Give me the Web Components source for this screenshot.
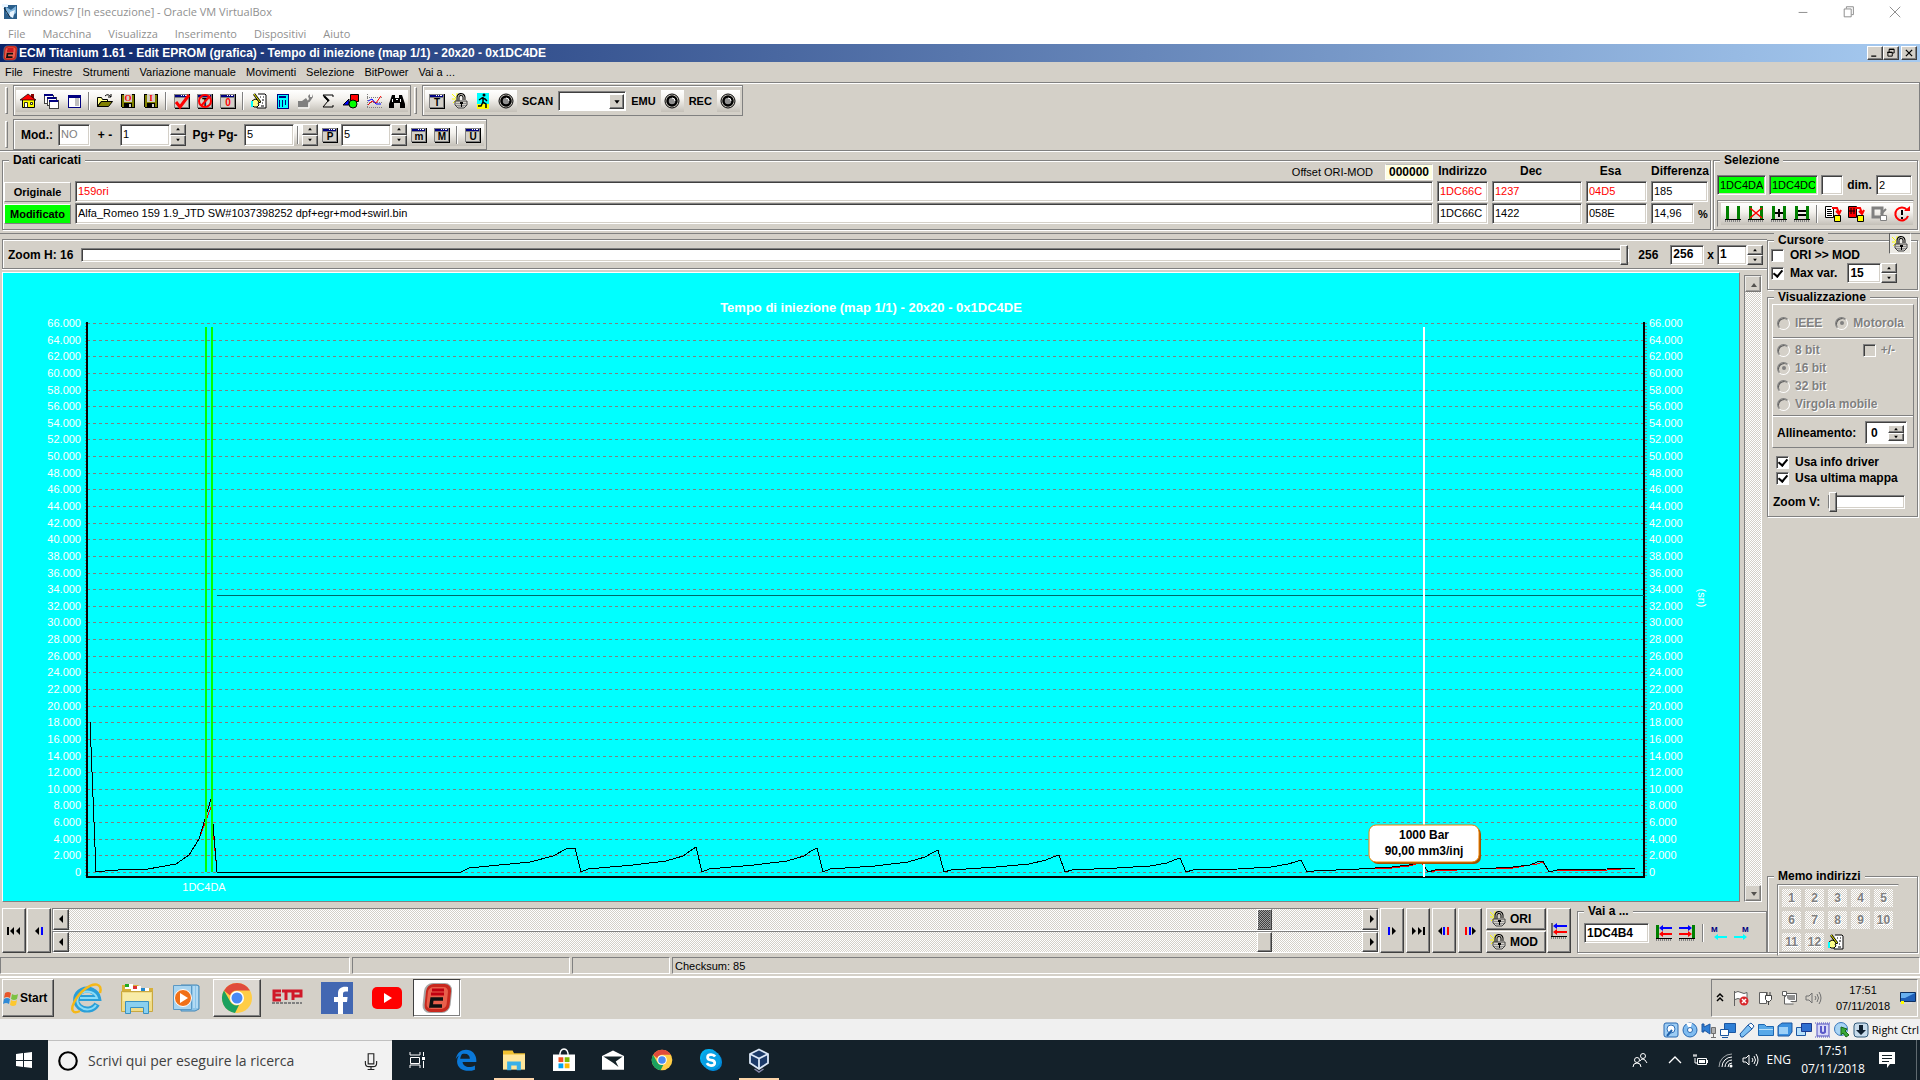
<!DOCTYPE html>
<html lang="it">
<head>
<meta charset="utf-8">
<title>windows7 [In esecuzione] - Oracle VM VirtualBox</title>
<style>
  body {
    margin: 0;
    background: #d4d0c8;
    color: #000;
    font: 11px/14px "Liberation Sans", Arial, sans-serif;
  }
</style>
</head>
<body>
<vm-desktop></vm-desktop>

<script>
const shared = `
  * { box-sizing: border-box; }
  :host { display: block; }
  button, input, select { font: inherit; color: inherit; margin: 0; padding: 0; border-radius: 0; }
  a { color: inherit; text-decoration: none; }
  .row { display: flex; align-items: center; }
  .raised {
    background: #d4d0c8;
    border: 1px solid;
    border-color: #fff #404040 #404040 #fff;
    box-shadow: inset -1px -1px #808080;
  }
  .dither { background: repeating-conic-gradient(#fff 0 25%, #d4d0c8 0 50%) 0 0 / 2px 2px; }
`;

class Part extends HTMLElement {
  connectedCallback() {
    if (this.shadowRoot) return;
    this.attachShadow({mode: 'open'});
    this.shadowRoot.innerHTML = `<style>${shared}${this.css()}</style>${this.html()}`;
    this.ready();
  }
  attr(name, fallback = '') {
    return this.hasAttribute(name) ? this.getAttribute(name) : fallback;
  }
  css() { return ''; }
  html() { return '<slot></slot>'; }
  ready() {}
}

/* ---------- icons ---------- */

const win = (letter, color = '#000', size = 10) => `
  <g shape-rendering="crispEdges"><path fill="#000" d="M1 1h15v15H1z"/><path fill="#808080" d="M0 1h15v14H0z"/>
  <path fill="#d4d0c8" d="M1 5h13v9H1z"/><path fill="#000080" d="M1 2h13v2H1z"/>
  <path fill="#fff" d="M7 2h1v1H7zM9 2h1v1H9zM11 2h2v1h-2z"/></g>
  <text x="8" y="13" text-anchor="middle" font-family="Liberation Sans" font-weight="bold" font-size="${size}" fill="${color}">${letter}</text>`;

const floppy = letter => `
  <g shape-rendering="crispEdges"><path fill="#000" d="M1 1h14v14H2l-1-1z"/><path fill="#808000" d="M2 2h2v12H2zM12 2h2v12h-2zM4 9h8v1H4z"/>
  <path fill="#d4d0c8" d="M4 1h8v8H4z"/><path fill="#d4d0c8" d="M9 11h2v3H9z"/></g>
  <text x="8" y="8" text-anchor="middle" font-family="Liberation Serif" font-weight="bold" font-size="9" fill="#f00">${letter}</text>`;

const lock = `
  <path stroke="#ff0" stroke-width="1" d="M0 1l4 4M0 6h4M5 0v4M1 10l3-3"/>
  <path fill="none" stroke="#000" stroke-width="3" d="M6 8V5a3 3 0 0 1 6-1v3"/><path fill="none" stroke="#d4d0c8" d="M6 8V5a3 3 0 0 1 6-1v3"/>
  <path fill="#d4d0c8" stroke="#404040" d="M3 8h12v4l-3 3H6l-3-3z"/><path stroke="#909090" d="M4 10.500h10M4 12.500h10M6 14h6"/>
  <path fill="#000" d="M8 9h3v2h-1v3H9v-3H8z"/>`;

const target = `
  <circle cx="8" cy="8" r="7" fill="#d4d0c8" stroke="#000"/><circle cx="8" cy="8" r="4.500" fill="#909090" stroke="#000" stroke-width="2.500"/>
  <path d="M8 5a3 3 0 0 1 3 3" stroke="#fff" fill="none"/>`;

const hand = `
  <path fill="#fff" stroke="#000" d="M7 1h7l1 1v13H6V6"/><path stroke="#000" d="M9 4h1M12 4h1M11 7h2M11 10h1M10 13h3"/>
  <path fill="#ff8" stroke="#000" d="M1 8l3-2 3 1 3 2-3 1 1 2-2 2H3l-2-2z"/><path fill="#0ff" d="M0 8h2v6H0z"/>
  <path stroke="#000" stroke-width="2.500" d="M3 1l6 8"/><path stroke="#ff0" d="M3 1l6 8"/>`;

const ticks = '<path stroke="#000" d="M0 13.5h16"/><path stroke="#808080" stroke-width="2" stroke-dasharray="1 1" d="M0 15h16"/>';
const posts = '<path fill="#008000" d="M1 0h3v13H1zM12 0h3v13h-3z"/>';

const chrome = `
  <circle cx="16" cy="16" r="15" fill="#ffcd46"/><path fill="#e04b3c" d="M3 8.5A15 15 0 0 1 29 8.500H16a7.500 7.500 0 0 0-7 5z"/>
  <path fill="#1ba15f" d="M3 8.500 9.500 20A7.500 7.500 0 0 0 18 23l-4 8A15 15 0 0 1 3 8.500z"/>
  <circle cx="16" cy="16" r="7" fill="#fff"/><circle cx="16" cy="16" r="5.500" fill="#4a8af4"/>`;

const ecm = `
  <rect x="2" y="1" width="28" height="30" rx="8" fill="#808080" opacity=".7" transform="skewX(-6) translate(2)"/>
  <rect x="4" y="2" width="25" height="28" rx="7" fill="#c8281e" transform="skewX(-6) translate(2)"/>
  <rect x="6" y="5" width="20" height="22" rx="5" fill="#e8604c" transform="skewX(-6) translate(2)"/>
  <path d="M11 8h12M10 12h13" stroke="#c00010" stroke-width="3"/><path d="M22 17H11l-1 7h11" fill="none" stroke="#101010" stroke-width="3.500"/>`;

const monitor = '<path fill="#2f7fd6" stroke="#1c56a0" d="M4.500 1.500h11v9h-11z"/><path fill="#fff" stroke="#1c56a0" d="M.5 7.500h8v6h-8z"/><path stroke="#1c56a0" d="M2 15.500h6"/>';

const speaker = c => `<path fill="none" stroke="${c}" d="M1 6v4h3l3 3V3L4 6zM10 6q2 2 0 4M12 4q3 4 0 8M14 2q4 6 0 12"/>`;

const ICONS = {
  vm: '<path fill="#2b5f8c" d="M2 1h13v14H2z"/><path fill="#7fb4dc" d="M4 3l5 3 5-4v7l-5 4-5-4z"/><path fill="#e8f4ff" d="M0 0h6v3H0zM8 8l5-2-2 8-4-2z"/><path stroke="#123" d="M2 4l6 9"/>',
  ecm,
  home: '<path fill="#800" d="M11 1h3v5h-3z"/><path fill="#ff0" stroke="#000" d="M2.500 6.500h12v8h-12z"/><path fill="#f00" stroke="#000" stroke-width=".7" d="M0 7 8 1l8 6z"/><path fill="#fff" stroke="#000" stroke-width=".8" d="M4.500 9.500h3v5h-3zM10.500 9.500h2v2h-2z"/>',
  windows: '<g fill="#fff" stroke="#404040" shape-rendering="crispEdges"><path d="M1 2h9v8H1z"/><path d="M4 4h9v8H4z"/><path d="M6 7h9v8H6z"/><path stroke="#000080" stroke-width="2" d="M1 2h9M4 5h9M6 8h9"/></g>',
  panes: '<g shape-rendering="crispEdges"><path fill="#fff" stroke="#000080" d="M2 2h12v12H2z"/><path fill="#000080" d="M2 2h12v3H2z"/><path fill="#c0c0c0" d="M9 5h4v8H9z"/></g>',
  open: '<path fill="none" stroke="#000" d="M8 3q3-3 6 1M14 1v3h-3"/><path fill="#ff8" stroke="#000" d="M.5 13.500v-9h4l1 2h5v2H4z"/><path fill="#808000" stroke="#000" d="M.5 13.500l4-5h11l-4 5z"/>',
  saveo: floppy('O'),
  savei: floppy('I'),
  check: win('') + '<path fill="none" stroke="#f00" stroke-width="3" d="M2 9l4 5 9-12"/>',
  no: win('T') + '<circle cx="8" cy="8" r="6" fill="none" stroke="#f00" stroke-width="2"/><path stroke="#f00" stroke-width="2" d="M4 13 13 3"/>',
  zero: win('0', '#f00'),
  hand,
  calc: '<g shape-rendering="crispEdges"><path fill="#0ff" stroke="#000080" d="M3 1h11v14H3z"/><path fill="#000080" d="M5 3h7v2H5zM5 7h1v7H5zM8 7h1v7H8zM11 7h1v5h-1z"/></g>',
  fix: '<path fill="#808080" d="M1 8h4l4-3 2 3v6H1zM10 9l2-3-1-3 2-2v3h2V1l1 3-2 3-3 4z"/><path fill="none" stroke="#fff" d="M1 15h11V9"/>',
  sigma: '<path fill="none" stroke="#000" stroke-width="1" d="M13 4V2H3l5 6-5 6h10v-2"/><path stroke="#000" stroke-width="2" d="M4 3l5 5"/>',
  shapes: '<path fill="#f00" stroke="#000" d="M7.500 1.500h8v7h-8z"/><path fill="#00f" stroke="#000" d="M0 12 6 6v6z"/><circle cx="10" cy="11" r="4" fill="#0f0" stroke="#000"/>',
  plot: '<path stroke="#808080" d="M1.500 1v14M1 14.500h15M1 4.500h15M1 9.500h15" stroke-dasharray="1 1"/><path fill="none" stroke="#f00" d="M2 12l4-4 4 2 5-7"/><path fill="none" stroke="#00f" d="M2 8l4-2 4 5 5 0"/>',
  binoc: '<path d="M3 2h3v3h4V2h3l3 9v4h-5v-5H5v5H0v-4z"/><path fill="#fff" d="M3 6h1v3H3zM11 6h1v3h-1zM7 6h2v1H7z"/>',
  T: win('T'), P: win('P'), m: win('m'), M: win('M'), U: win('U'),
  lock, target,
  run: '<path fill="#0ff" d="M2 0h12v11H2z"/><path fill="#ff0" d="M2 11h12v5H2z"/><circle cx="9" cy="2" r="1.500"/><path fill="none" stroke="#000" stroke-width="1.500" d="M8 4v5l3 2v4M8 9l-2 4H3M4 7l3-2 3 1 2 2"/>',
  sel1: ticks + posts,
  sel2: ticks + posts + '<path stroke="#f00" stroke-width="1.500" d="M2 2l12 10M14 2 2 12"/>',
  sel3: ticks + posts + '<path stroke="#000" stroke-width="2" d="M4 7h8M8 3v8"/>',
  sel4: ticks + posts + '<path stroke="#000" stroke-width="2" d="M4 5h8M4 9h8"/>',
  copy: '<path fill="#fff" stroke="#000" d="M.5.5h6l2 2v9h-8z"/><path stroke="#000" d="M2 3.500h4M2 5.500h5M2 7.500h5M2 9.500h5"/><path fill="none" stroke="#f00" stroke-width="2" d="M7 2h5l2 5M11 5l3 3 2-4"/><path fill="#ff0" stroke="#000" d="M9.500 9.500h6v6h-6z"/>',
  copy2: '<path fill="#f00" stroke="#000" d="M.5.5h8v11h-8z"/><path stroke="#000" d="M3 2v6M1 5h6M6 2v6"/><path fill="none" stroke="#f00" stroke-width="2" d="M7 2h5l2 5M11 5l3 3 2-4"/><path fill="#ff0" stroke="#000" d="M9.500 9.500h6v6h-6z"/>',
  copy3: '<path fill="none" stroke="#808080" stroke-width="3" d="M2 2h9v9H2z"/><path fill="#fff" stroke="#808080" d="M9.500 9.500h6v5h-6z"/><path stroke="#808080" stroke-width="2" d="M10 8l5-5"/>',
  reload: '<path fill="none" stroke="#f00" stroke-width="2" d="M13 4A6.500 6.500 0 1 0 14 10"/><path fill="#f00" d="M10 5h6V0z"/><path stroke="#000" stroke-width="2" d="M8 4v5M8 11v2"/>',
  first: '<path d="M1 4h2v8H1zM8 4v8L4 8zM14 4v8l-4-4z"/>',
  prev: '<path d="M8 4v8L4 8z"/><path fill="#00f" d="M10 4h2v8h-2z"/>',
  next: '<path fill="#00f" d="M4 4h2v8H4z"/><path d="M8 4v8l4-4z"/>',
  last: '<path d="M13 4h2v8h-2zM8 4v8l4-4zM2 4v8l4-4z"/>',
  prevd: '<path d="M6 4v8L2 8z"/><path fill="#00f" d="M7 4h2v8H7z"/><path fill="#f00" d="M11 4h2v8h-2z"/>',
  nextd: '<path fill="#f00" d="M3 4h2v8H3z"/><path fill="#00f" d="M7 4h2v8H7z"/><path d="M10 4v8l4-4z"/>',
  arrows: ticks + '<path stroke="#000" d="M1 0v14"/><path fill="#00f" d="M2 3l4-3v2h10v2H6v2z"/><path fill="#f00" d="M2 9l4-3v2h10v2H6v2z"/>',
  arrowsl: ticks + '<path fill="#008000" d="M0 0h3v13H0z"/><path fill="#00f" d="M3 3l4-3v2h9v2H7v2z"/><path fill="#f00" d="M3 9l4-3v2h9v2H7v2z"/>',
  arrowsr: ticks + '<path fill="#008000" d="M13 0h3v13h-3z"/><path fill="#00f" d="M13 3 9 0v2H0v2h9v2z"/><path fill="#f00" d="M13 9 9 6v2H0v2h9v2z"/>',
  ml: '<text x="0" y="7" font-family="Liberation Sans" font-weight="bold" font-size="8" fill="#000080">M</text><path fill="#0ff" d="M3 12l4-3v2h9v2H7v2z"/>',
  mr: '<text x="8" y="7" font-family="Liberation Sans" font-weight="bold" font-size="8" fill="#000080">M</text><path fill="#0ff" d="M13 12 9 9v2H0v2h9v2z"/>',
  flag7: '<path fill="#e8562a" d="M2 3q3-2 6 0l-1 5q-3-2-6 0z"/><path fill="#7cc242" d="M9 4q3 2 6 0l-1 5q-3 2-6 0z"/><path fill="#2f8ad6" d="M1 9q3-2 6 0l-1 5q-3-2-6 0z"/><path fill="#fdc82f" d="M8 10q3 2 6 0l-1 5q-3 2-6 0z"/>',
  ie: '<path fill="none" stroke="#2a9fd8" stroke-width="6" d="M26 22a11 10 0 1 1 1-6H8"/><path fill="none" stroke="#8adcf8" stroke-width="2" d="M25 23a10 9 0 1 1 1-7H9"/><path fill="none" stroke="#f5b818" stroke-width="2.500" d="M29 11c3-10-6-11-15-4S-2 27 3 30q2 1 6-1"/>',
  folder: '<path fill="#d8b038" d="M1 3h16l3 3h12v23H1z"/><path fill="#fff" d="M4 2h8v5H4zM10 4h10v5H10zM19 6h9v5h-9z"/><path fill="#2a2" d="M4 2h4v3H4z"/><path fill="#d33" d="M12 4h4v3h-4z"/><path fill="#28c" d="M20 6h4v3h-4z"/><path fill="#f0dc88" stroke="#c8a840" d="M.5 9.500h31v20H.5z"/><path fill="#f8eca8" d="M2 11h28v8H2z"/><path fill="#8ad0f0" stroke="#3a90c0" d="M4.500 31.500v-12h23v12h-5v-6h-13v6z"/>',
  media: '<path fill="#8cc4e8" stroke="#4488b8" d="M10 3h16l2 1v23l-4 2H10z"/><path fill="none" stroke="#d8f0ff" d="M23 4v22M26 4v22"/><path fill="#a8d4f0" stroke="#5a98c4" d="M2.500 3.500h18v24h-18z"/><circle cx="12" cy="16" r="8.500" fill="#f07018" stroke="#fff"/><path fill="#fff" d="M9 11l8 5-8 5z"/>',
  chrome,
  etp: '<path fill="none" stroke="#d01828" stroke-width="3" d="M10 9H3v9h7M3 13h7M11 9h11M15 9v9M22 18V9h8v5h-8"/><path stroke="#808080" stroke-width="2" stroke-dasharray="3 1" d="M1 21h30"/>',
  facebook: '<path fill="#4267b2" d="M0 0h32v32H0z"/><path fill="#fff" d="M22 32V20h4l.6-5H22v-3c0-1.500.5-2.500 2.500-2.500H27V5c-6-1-10 1-10 6.500V15h-4v5h4v12z"/>',
  youtube: '<rect x="1" y="5" width="30" height="22" rx="5" fill="#f00"/><path fill="#fff" d="M13 11l8 5-8 5z"/>',
  up2: '<path fill="none" stroke="#000" stroke-width="1.500" d="M5 7l3-3 3 3M5 11l3-3 3 3"/>',
  flagx: '<path fill="#fff" stroke="#606060" d="M1.500 1v15M2 2.500q3-2 6 0t6 0v7q-3 2-6 0t-6 0"/><circle cx="11" cy="11" r="4.500" fill="#d8282c"/><path stroke="#fff" stroke-width="1.500" d="M9 9l4 4M13 9l-4 4"/>',
  plug: '<path fill="#fff" stroke="#606060" d="M2.500 2.500h7v11h-7z"/><path fill="#fff" stroke="#404040" d="M8.500 5.500h6v4l-2 2h-2l-2-2zM10 2v3M13 2v3M11.500 12v3"/>',
  net: '<path fill="#909090" stroke="#606060" d="M4.500 3.500h11v8h-11z"/><path fill="none" stroke="#fff" d="M5.500 4.500h9v6h-9z"/><path fill="#fff" stroke="#606060" d="M1.500 1.500h4v4h-4zM3.500 6v8h9"/>',
  vol: speaker('#707070'),
  desk: '<path fill="#1f5fb8" stroke="#0c2f60" d="M.5 2.500h15v9H.5z"/><path fill="#68b0f0" d="M1 3h14L5 8H1z"/><path fill="#d8d8d8" d="M4 12h8v2H4z"/><path fill="#ff0" d="M1 11h3v3H1z"/>',
  hdd: '<rect x="1" y="1" width="14" height="14" rx="2" fill="#9cccf4" stroke="#2868b0"/><circle cx="8" cy="7" r="4" fill="#fff" stroke="#3070b8"/><path stroke="#2060a8" stroke-width="2" d="M4 14l5-6"/>',
  cd: '<circle cx="8" cy="8" r="7" fill="#80bcf0" stroke="#2868b0"/><path fill="#fff" d="M8 8 4 1h6z"/><circle cx="8" cy="8" r="2.500" fill="#fff" stroke="#2868b0"/>',
  audio: '<path fill="#2f7fd6" stroke="#1c56a0" d="M1 2h2v3l6-3v10L3 8v2H1z"/><path fill="#b0b0b0" stroke="#707070" d="M10.500 5.500h4v6h-4zM12.500 12v3M10 15.500h5"/>',
  netw: monitor,
  usb: '<path fill="#7cc0f4" stroke="#1c56a0" d="M1 12l8-9 4 4-9 8H2z"/><path fill="#fff" stroke="#1c56a0" d="M9 3l3-2 3 3-2 3z"/>',
  share: '<path fill="#58a8e8" stroke="#1c66b0" d="M.5 2.500h6l2 2h7v9H.5z"/><path fill="#b8e0fa" d="M1 7h14v1H1z"/>',
  disp: '<path fill="#3a90e0" stroke="#1c56a0" d="M1 4l4-3h10v9l-3 4H1z"/><path fill="#9cd0f8" d="M2 5h9v7H2z"/>',
  rec: '<path fill="#b8e0fa" stroke="#1c56a0" d="M.5 5.500h9v8h-9z"/><path fill="#2f6fd0" stroke="#1c3a90" d="M5.500 1.500h10v8h-10z"/>',
  cpu: '<rect x="2" y="2" width="12" height="12" fill="#d8d8f8" stroke="#5050c0"/><path stroke="#5050c0" stroke-dasharray="1 1" d="M0 1h16M0 15h16"/><path fill="none" stroke="#5858c8" stroke-width="2" d="M6 4v6q2 2 4 0V4"/>',
  mouse: '<circle cx="7" cy="7" r="6.500" fill="#a8d4f4" stroke="#3a78bc"/><path fill="#38a838" stroke="#186818" d="M7 5l6 2-2 2 4 4-3 2-3-4-2 2z"/>',
  key: '<rect x="1" y="1" width="14" height="14" rx="3" fill="#c8dcec" stroke="#305878"/><path fill="#102030" d="M6 3h4v5h3l-5 5-5-5h3z"/>',
  win10: '<path fill="#fff" d="M0 2l7-1v7H0zM8 1l8-1v8H8zM0 9h7v6l-7-1zM8 9h8v7l-8-1z"/>',
  cortana: '<circle cx="8" cy="8" r="7" fill="none" stroke="#000" stroke-width="1.700"/>',
  mic: '<path fill="none" stroke="#222" d="M5.500 1.500h5v9h-5zM3 8v2q0 3 3 3h4q3 0 3-3V8M8 13v3M5 15.500h6"/>',
  task: '<path fill="none" stroke="#fff" d="M1 0v3h10V0M1.500 5.500h9v6h-9zM1 16v-3h10v3M14.500 0v4M14.500 9v7"/><path fill="#fff" d="M13 5h3v3h-3z"/>',
  edge: '<path fill="#0a78d8" d="M.5 7.500C1.500 2.500 4.500.5 8 .5c4.500 0 7.500 3.500 7.500 7.500v1.500h-10c.5 4 5.500 4.500 9 2.500v3c-6.500 2.500-13-.5-13-6 0-3 1.500-5 4-6-.8 1-1.500 2.500-1.700 4h7c0-2-1.300-3.500-3.800-3.500-3 0-5.500 2-6.500 4z"/>',
  explorer: '<path fill="#f0c030" d="M0 1h7l1 2h8v11H0z"/><path fill="#ffe69a" d="M0 4h16v11H0z"/><path fill="#38b0e8" d="M3 15.500V9h10v6.500h-3V12H6v3.500z"/>',
  store: '<path fill="none" stroke="#fff" d="M5 5Q5 0 8 0t3 5"/><path fill="#fff" d="M0 4h16v12H0z"/><path fill="#f25022" d="M4 6h3.500v3.500H4z"/><path fill="#7fba00" d="M8.500 6H12v3.500H8.500z"/><path fill="#00a4ef" d="M4 10.500h3.500V14H4z"/><path fill="#ffb900" d="M8.500 10.500H12V14H8.500z"/>',
  mail: '<path fill="#fff" d="M0 5l8-4 8 4v10H0z"/><path fill="#142228" d="M1 5.500h14L10 9l2 4-4-3z"/>',
  skype: '<rect width="13" height="13" rx="6" fill="#00aff0"/><rect x="3" y="3" width="13" height="13" rx="6" fill="#0088d8"/><circle cx="8" cy="8" r="7" fill="#08a0e4"/><path fill="none" stroke="#fff" stroke-width="2" d="M11 5.500Q10 4 8 4 5.500 4 5.500 6T8 8t2.700 2T8 12q-2 0-3-1.700"/>',
  vbox: '<path fill="#1c3a68" stroke="#dce8f8" stroke-width="1.200" d="M8 1l6 3v6l-6 4-6-4V4z"/><path fill="none" stroke="#dce8f8" stroke-width="1.200" d="M2 4l6 3 6-3M8 7v7"/><path fill="none" stroke="#88a" d="M5 14l3 2 3-2"/>',
  people: '<g fill="none" stroke="#fff"><circle cx="5" cy="8" r="2.500"/><path d="M1 15q0-4 4-4t4 4"/><circle cx="11" cy="4" r="2.500"/><path d="M8 9q1-2 3-2t4 4"/></g>',
  up: '<path fill="none" stroke="#fff" stroke-width="1.300" d="M2 11l6-6 6 6"/>',
  battery: '<path fill="none" stroke="#fff" d="M5.500 6.500h9v6h-9zM1 4h4M2 2v2M4 2v2M3 6v5h2"/><path fill="#fff" d="M7 8h6v3H7zM15 8h1v3h-1z"/>',
  wifi: '<g fill="none" stroke="#fff"><path d="M2 15A13 13 0 0 1 15 2" opacity=".6"/><path d="M5 15A10 10 0 0 1 15 5M8 15a7 7 0 0 1 7-7M11 15a4 4 0 0 1 4-4"/></g><circle cx="14" cy="14" r="1.500" fill="#fff"/>',
  volw: speaker('#fff'),
  action: '<path fill="#fff" d="M0 0h16v12H11l-3 4v-4H0z"/><path stroke="#142228" d="M3 3.500h10M3 6.500h10M3 9.500h7"/>',
  min: '<path stroke="#808080" d="M3 8.500h10"/>',
  restore: '<path fill="none" stroke="#808080" d="M2.500 4.500h8v9h-8zM5 4V2h8v9h-2"/>',
  close: '<path stroke="#808080" d="M2 2l12 12M14 2 2 14"/>',
  min7: '<path d="M2 12h8v2H2z"/>',
  restore7: '<path fill="none" stroke="#000" stroke-width="1.500" d="M5 7V2h8v6h-3M3 7h7v6H3z"/><path d="M5 1h8v2H5zM2 6h8v2H2z"/>',
  close7: '<path stroke="#000" stroke-width="2" d="M3 3l10 10M13 3 3 13"/>',
  up7: '<path d="M8 6l3 4H5z"/>', down7: '<path d="M8 10 5 6h6z"/>',
  left7: '<path d="M5 8l4-4v8z"/>', right7: '<path d="M11 8 7 4v8z"/>'
};
const BIG = ['ie', 'folder', 'media', 'chrome', 'etp', 'facebook', 'youtube', 'ecm'];

class UiIcon extends Part {
  css() {
    const s = this.attr('size', '16');
    return `:host { display: block; flex: none; width: ${s}px; height: ${s}px; } svg { display: block; overflow: visible; }`;
  }
  html() {
    const name = this.attr('name'), s = this.attr('size', '16'), box = BIG.includes(name) ? 32 : 16;
    return `<svg width="${s}" height="${s}" viewBox="0 0 ${box} ${box}" aria-hidden="true">${ICONS[name]}</svg>`;
  }
}
customElements.define('ui-icon', UiIcon);

/* ---------- small controls ---------- */

class ToolButton extends Part {
  css() {
    return `button { display: flex; align-items: center; justify-content: center; width: 23px; height: 22px; border: 0;
      background: linear-gradient(#fff, #f4f2ee 40%, #c4c0b8); }`;
  }
  html() {
    return `<button aria-label="${this.attr('icon')}"><ui-icon name="${this.attr('icon')}"></ui-icon></button>`;
  }
}
customElements.define('tool-button', ToolButton);

class ToolSep extends Part {
  css() {
    return `:host { width: 8px; height: 22px; padding: 2px 3px; background: linear-gradient(#fff, #f4f2ee 40%, #c4c0b8); }
      i { display: block; height: 18px; width: 2px; border-left: 1px solid #808080; border-right: 1px solid #fff; }`;
  }
  html() { return '<i></i>'; }
}
customElements.define('tool-sep', ToolSep);

class ToolBand extends Part {
  css() {
    return `:host { display: flex; height: 31px; }
      i { width: 3px; margin: 2px 5px 2px 3px; border: 1px solid; border-color: #fff #808080 #808080 #fff; }
      div { display: flex; align-items: center; padding: 0 2px; border: 1px solid #808080; box-shadow: inset 1px 1px #fff; }`;
  }
  html() { return '<i></i><div><slot></slot></div>'; }
}
customElements.define('tool-band', ToolBand);

class TextField extends Part {
  css() {
    return `:host { width: ${this.hasAttribute('w') ? this.attr('w') + 'px' : 'auto'}; }
      input { display: block; width: 100%; height: ${this.attr('h', '21')}px; padding: 0 2px 1px; outline: 0;
        background: ${this.attr('fill', '#fff')}; color: ${this.attr('ink', '#000')};
        border: 1px solid; border-color: #808080 #fff #fff #808080;
        box-shadow: inset 1px 1px #404040, inset -1px -1px #d4d0c8;
        font-weight: ${this.hasAttribute('bold') ? 'bold' : 'normal'}; font-size: ${this.hasAttribute('bold') ? 12 : 11}px; }`;
  }
  html() {
    return `<input type="text" aria-label="${this.attr('label')}" value="${this.attr('value')}">`;
  }
}
customElements.define('text-field', TextField);

class SpinButtons extends Part {
  css() {
    return `:host { width: 16px; } button { display: flex; align-items: center; justify-content: center; width: 16px; height: ${this.attr('h', '11')}px; overflow: hidden; }`;
  }
  html() {
    return `<button class="raised" aria-label="su"><ui-icon name="up7" size="10"></ui-icon></button>
      <button class="raised" aria-label="giù"><ui-icon name="down7" size="10"></ui-icon></button>`;
  }
}
customElements.define('spin-buttons', SpinButtons);

class CheckItem extends Part {
  css() {
    const radio = this.attr('type', 'checkbox') === 'radio';
    return `label { display: flex; align-items: center; gap: 6px; font-weight: bold; font-size: 12px; line-height: 16px; white-space: nowrap; }
      label.off { color: #808080; text-shadow: 1px 1px #fff; gap: 5px; }
      input { appearance: none; flex: none; width: 13px; height: 13px; background: #fff; display: grid; place-items: center;
        border: 1px solid; border-color: #808080 #fff #fff #808080; box-shadow: inset 1px 1px #404040; }
      .off input { background: #d4d0c8; }
      ${radio ? 'input { border-radius: 50%; box-shadow: inset 1px 1px #606060; } input:checked::before { content: ""; width: 4px; height: 4px; border-radius: 50%; background: #808080; }'
        : 'input:checked::before { content: ""; width: 4px; height: 7px; margin-top: -2px; border: solid #000; border-width: 0 2px 2px 0; rotate: 40deg; }'}`;
  }
  html() {
    const off = this.hasAttribute('off');
    return `<label class="${off ? 'off' : ''}"><input type="${this.attr('type', 'checkbox')}" ${off ? 'disabled' : ''} ${this.hasAttribute('on') ? 'checked' : ''}><slot></slot></label>`;
  }
}
customElements.define('check-item', CheckItem);

class GroupBox extends Part {
  css() {
    return `fieldset { height: 100%; min-width: 0; margin: 0; padding: 0; border: 1px solid #808080; box-shadow: inset 1px 1px #fff, 1px 1px #fff; }
      legend { margin-left: 6px; padding: 0 4px; height: 14px; background: #d4d0c8; font-weight: bold; font-size: 12px; line-height: 14px; }`;
  }
  html() { return `<fieldset><legend>${this.attr('label')}</legend><slot></slot></fieldset>`; }
}
customElements.define('group-box', GroupBox);

class RangeBar extends Part {
  css() {
    return `:host { display: flex; }
      input { appearance: none; width: 100%; height: 20px; background: none; }
      input::-webkit-slider-runnable-track { height: 14px; background: #fff; border: 1px solid; border-color: #808080 #fff #fff #808080; box-shadow: inset 1px 1px #404040, inset -1px -1px #d4d0c8; }
      input::-webkit-slider-thumb { appearance: none; width: 8px; height: 20px; margin-top: -4px; background: #d4d0c8; border: 1px solid; border-color: #fff #404040 #404040 #fff; box-shadow: inset -1px -1px #808080; }`;
  }
  html() { return `<input type="range" aria-label="${this.attr('label')}" value="${this.attr('value')}">`; }
}
customElements.define('range-bar', RangeBar);

class ScrollTrack extends Part {
  css() {
    const v = this.hasAttribute('vertical');
    return `:host { display: flex; flex-direction: ${v ? 'column' : 'row'}; border: 1px solid; border-color: #808080 #fff #fff #808080; }
      button { display: grid; place-items: center; width: ${v ? 'auto' : '16px'}; height: ${v ? '16px' : 'auto'}; overflow: hidden; ${v ? 'opacity: .6;' : ''} }
      .dither { flex: 92; } .dither.end { flex: 7; }
      .thumb { width: 15px; ${this.hasAttribute('dark') ? 'background: repeating-conic-gradient(#404040 0 25%, #a0a0a0 0 50%) 0 0 / 2px 2px;' : ''} }`;
  }
  html() {
    const v = this.hasAttribute('vertical');
    return `<button class="raised" aria-label="indietro"><ui-icon name="${v ? 'up7' : 'left7'}"></ui-icon></button>
      <div class="dither"></div>${v ? '' : '<div class="thumb raised"></div><div class="dither end"></div>'}
      <button class="raised" aria-label="avanti"><ui-icon name="${v ? 'down7' : 'right7'}"></ui-icon></button>`;
  }
}
customElements.define('scroll-track', ScrollTrack);

/* ---------- window frames and bars ---------- */

class VmHeader extends Part {
  css() {
    return `:host { background: #fff; color: #909090; font: 11px/16px "Open Sans", "Noto Sans", sans-serif; }
      .title { height: 24px; gap: 5px; padding: 0 18px 0 2px; } .title span { flex: 1; }
      .title button { background: none; border: 0; margin-left: 27px; }
      nav { display: flex; gap: 17px; height: 20px; padding: 2px 8px; }`;
  }
  html() {
    return `<div class="row title"><ui-icon name="vm"></ui-icon><span>windows7 [In esecuzione] - Oracle VM VirtualBox</span>
      <button aria-label="min"><ui-icon name="min" size="14"></ui-icon></button>
      <button aria-label="restore"><ui-icon name="restore" size="14"></ui-icon></button>
      <button aria-label="close"><ui-icon name="close" size="14"></ui-icon></button></div>
      <nav>${['File', 'Macchina', 'Visualizza', 'Inserimento', 'Dispositivi', 'Aiuto'].map(t => `<a href="#">${t}</a>`).join('')}</nav>`;
  }
}
customElements.define('vm-header', VmHeader);

class EcmHeader extends Part {
  css() {
    return `.title { height: 18px; padding: 0 3px 0 2px; gap: 1px; color: #fff; font-weight: bold; font-size: 12px; background: linear-gradient(90deg, #0a246a, #a6caf0); }
      .title span { flex: 1; }
      .title button { width: 16px; height: 14px; display: grid; place-items: center; margin-left: -1px; } .title button:last-child { margin-left: 1px; }
      nav { display: flex; align-items: center; gap: 10px; height: 20px; padding: 0 5px; }`;
  }
  html() {
    return `<div class="row title"><ui-icon name="ecm"></ui-icon><span>ECM Titanium 1.61 - Edit EPROM (grafica) - Tempo di iniezione (map 1/1) - 20x20 - 0x1DC4DE</span>
      <button class="raised" aria-label="min"><ui-icon name="min7" size="10"></ui-icon></button>
      <button class="raised" aria-label="restore"><ui-icon name="restore7" size="10"></ui-icon></button>
      <button class="raised" aria-label="close"><ui-icon name="close7" size="10"></ui-icon></button></div>
      <nav>${['File', 'Finestre', 'Strumenti', 'Variazione manuale', 'Movimenti', 'Selezione', 'BitPower', 'Vai a ...'].map(t => `<a href="#">${t}</a>`).join('')}</nav>`;
  }
}
customElements.define('ecm-header', EcmHeader);

const tools = list => list.split(' ').map(n => n === '|' ? '<tool-sep></tool-sep>' : `<tool-button icon="${n}"></tool-button>`).join('');

class ToolPanel extends Part {
  css() {
    return `:host { border: 1px solid #808080; border-left: 0; box-shadow: inset 0 1px #fff, 0 1px #fff; padding: 2px 0 0 2px; height: 69px; }
      .row + .row { margin-top: 3px; } tool-band { font-weight: bold; }
      .cap { margin: 0 5px; } .f { display: flex; align-items: center; }
      select { appearance: none; border: 0; width: 48px; height: 16px; background: #fff; }
      .combo { display: flex; height: 20px; border: 1px solid; border-color: #808080 #fff #fff #808080; box-shadow: inset 1px 1px #404040; padding: 2px 1px 1px 2px; background: #fff; }
      .combo span { display: grid; place-items: center; width: 15px; height: 15px; }
      .mod, .pm, .pg { font-size: 12px; text-align: center; white-space: nowrap; }
      .mod { width: 42px; } .pm { width: 30px; } .pg { width: 58px; }`;
  }
  html() {
    return `<div class="row"><tool-band>${tools('home windows panes | open saveo savei | check no zero | hand calc fix sigma shapes plot binoc')}</tool-band>
      <tool-band>${tools('T lock run target')}<label class="f"><span class="cap">SCAN</span><span class="combo"><select><option></option></select><span class="raised"><ui-icon name="down7" size="14"></ui-icon></span></span></label>
        <span class="cap">EMU</span>${tools('target')}<span class="cap">REC</span>${tools('target')}</tool-band></div>
      <div class="row"><tool-band><span class="mod">Mod.:</span><text-field w="32" h="22" ink="#808080" value="NO" label="Mod."></text-field>
        <span class="pm">+ -</span><text-field w="50" h="22" value="1" label="passo"></text-field><spin-buttons></spin-buttons>
        <span class="pg">Pg+ Pg-</span><text-field w="50" h="22" value="5" label="pagina"></text-field>${tools('|')}<spin-buttons></spin-buttons>
        ${tools('P')}<text-field w="50" h="22" value="5" label="pagine"></text-field><spin-buttons></spin-buttons>${tools('m M | U')}</tool-band></div>`;
  }
}
customElements.define('tool-panel', ToolPanel);

class DataPanel extends Part {
  css() {
    return `:host { display: flex; gap: 2px; padding: 2px 2px 3px 2px; border-bottom: 1px solid #808080; }
      .main { flex: 1; } .sel { width: 205px; }
      .grid { display: grid; grid-template-columns: 67px 1fr 51px 90px 61px 57px; gap: 1px 4px; margin: -4px 2px 5px 1px; align-items: center; }
      .head { height: 17px; font-weight: bold; font-size: 12px; line-height: 17px; text-align: center; white-space: nowrap; } .shift { padding-right: 12px; }
      .off { grid-column: 1 / 3; display: flex; justify-content: flex-end; align-items: center; gap: 12px; font: 11px/14px "Liberation Sans"; }
      output { background: #ffffe1; padding: 0 3px; font-weight: bold; font-size: 12px; border: 1px solid #fff; border-top-color: #c0c0c0; }
      .grid button { height: 20px; font-weight: bold; border: 1px solid; border-color: #fff #808080 #808080 #fff; background: #d4d0c8; }
      .grid .mod { background: #0f0; } .f { display: flex; align-items: center; gap: 4px; font-weight: bold; }
      .in { gap: 3px; margin: 8px 5px 5px 3px; } .in .dim { flex: 1; text-align: center; font-weight: bold; font-size: 12px; }
      .tb { margin: 0 3px 2px 3px; padding: 2px 0 1px 3px; border: 1px solid; border-color: #808080 #d4d0c8 #d4d0c8 #808080; box-shadow: inset 0 1px #fff; }`;
  }
  html() {
    return `<group-box class="main" label="Dati caricati"><div class="grid">
      <div class="head off">Offset ORI-MOD<output>000000</output></div><div class="head">Indirizzo</div><div class="head shift">Dec</div><div class="head shift">Esa</div><div class="head">Differenza</div>
      <button>Originale</button><text-field ink="#f00" value="159ori" label="Originale"></text-field><text-field ink="#f00" value="1DC66C" label="Indirizzo"></text-field>
      <text-field ink="#f00" value="1237" label="Dec"></text-field><text-field ink="#f00" value="04D5" label="Esa"></text-field><text-field value="185" label="Differenza"></text-field>
      <button class="mod">Modificato</button><text-field value="Alfa_Romeo 159 1.9_JTD SW#1037398252 dpf+egr+mod+swirl.bin" label="Modificato"></text-field><text-field value="1DC66C" label="Indirizzo"></text-field>
      <text-field value="1422" label="Dec"></text-field><text-field value="058E" label="Esa"></text-field><div class="f"><text-field w="43" value="14,96" label="Differenza %"></text-field>%</div>
      </div></group-box>
      <group-box class="sel" label="Selezione"><div class="row in"><text-field w="49" h="20" fill="#0f0" value="1DC4DA" label="inizio"></text-field><text-field w="49" h="20" fill="#0f0" value="1DC4DC" label="fine"></text-field>
      <text-field w="22" h="20" label="sel"></text-field><span class="dim">dim.</span><text-field w="36" h="20" value="2" label="dim."></text-field></div>
      <div class="row tb">${tools('sel1 sel2 sel3 sel4 | copy copy2 copy3 reload')}</div></group-box>`;
  }
}
customElements.define('data-panel', DataPanel);

/* ---------- chart ---------- */

class InjectionChart extends Part {
  css() {
    return `:host { background: #0ff; border: 1px solid; border-color: #fff #808080 #808080 #fff; overflow: hidden; }
      svg { display: block; width: 100%; height: 100%; font: 11px "Liberation Sans"; }
      .c { shape-rendering: crispEdges; } .bt { font-weight: bold; font-size: 12px; } .title { font-weight: bold; font-size: 13px; }`;
  }
  html() { return '<svg role="img" aria-label="Tempo di iniezione"></svg>'; }
  ready() {
    this.draw();
    window.addEventListener('resize', () => this.draw());
  }
  draw() {
    const W = this.clientWidth, H = this.clientHeight;
    const left = 84, right = W - 95, top = 50, zero = H - 29, base = H - 24;
    const X = x => left + x * (right - left) / 1557;
    const Y = v => Math.round(zero - v * (zero - top) / 66000);
    const line = pts => pts.map(p => `${Math.round(X(p[0]))},${Y(p[1])}`).join(' ');

    const lead = [[3, 18000], [9, 0], [18, 100], [31, 250], [61, 400], [89, 1000], [102, 2100], [112, 4000]];
    const flat = [[130, 0], [374, 0], [382, 480], [443, 1150], [466, 1900], [481, 2900], [488, 2900], [494, 0]];
    const mod = [...lead, [124, 8800], ...flat];
    const ori = [...lead, [124, 7800], ...flat];
    const rise = [[7, .14], [52, .28], [85, .44], [102, .66], [109, .85], [115, 1], [121, 0]];
    [2950, 2900, 2650, 2100, 1650, 1450, 1250, 1350].forEach((peak, i) => {
      rise.forEach(([dx, k]) => {
        mod.push([494 + i * 121 + dx, k * peak]);
        ori.push([494 + i * 121 + dx, k * peak * (i > 5 ? .88 : 1)]);
      });
    });
    mod.push([1470, 200], [1520, 330], [1548, 500]);
    ori.push([1470, 200], [1520, 280], [1548, 450]);

    let out = `<text class="title" x="${X(784)}" y="39" fill="#fff" text-anchor="middle">Tempo di iniezione (map 1/1) - 20x20 - 0x1DC4DE</text>`;
    for (let k = 0; k <= 33; k++) {
      const y = Y(k * 2000), label = k ? `${k * 2}.000` : '0';
      out += `<path class="c" stroke="#808080" stroke-dasharray="3 3" d="M${left} ${y + .5}H${right}"/>
        <text x="78" y="${y + 4}" fill="#fff" text-anchor="end">${label}</text><text x="${right + 5}" y="${y + 4}" fill="#fff">${label}</text>`;
    }
    const cx = Math.round(X(1337));
    out += `<path class="c" stroke="#808080" stroke-dasharray="1 2" stroke-width="2" d="M${left - 1} ${top}V${base}M${right + 2} ${top}V${base}"/>
      <path class="c" fill="none" stroke="#000" stroke-width="2" d="M${left} ${top - 1}V${base}H${right}V${top - 1}"/>
      <path class="c" stroke="#006868" d="M${X(130)} ${Y(33350) + .5}H${right}"/>
      <polyline class="c" fill="none" stroke="#f00" points="${line(ori)}"/><polyline class="c" fill="none" stroke="#000" points="${line(mod)}"/>
      <path class="c" stroke="#0f0" stroke-width="2" d="M${Math.round(X(119))} ${top + 4}V${zero}M${Math.round(X(125))} ${top + 4}V${zero}"/>
      <text x="${X(117)}" y="${H - 10}" fill="#fff" text-anchor="middle">1DC4DA</text>
      <path class="c" stroke="#fff" stroke-width="2" d="M${cx} ${top + 4}V${base}"/>
      <text transform="translate(${right + 54} ${Y(33000)}) rotate(90)" fill="#fff" text-anchor="middle">(sn)</text>
      <rect x="${cx - 53}" y="${H - 74}" width="110" height="37" rx="7" fill="#a05000"/>
      <rect x="${cx - 55}" y="${H - 76}" width="110" height="37" rx="7" fill="#fff" stroke="#f08000"/>
      <text class="bt" x="${cx}" y="${H - 62}" text-anchor="middle">1000 Bar</text><text class="bt" x="${cx}" y="${H - 46}" text-anchor="middle">90,00 mm3/inj</text>`;
    this.shadowRoot.querySelector('svg').innerHTML = out;
  }
}

/* ---------- work area ---------- */

class WorkArea extends Part {
  css() {
    return `:host { display: flex; flex-direction: column; min-width: 0; }
      .zoom { height: 30px; margin: 5px 0 3px 2px; padding: 1px 4px 0 5px; border: 1px solid #808080; border-right: 0; box-shadow: inset 1px 1px #fff, 0 1px #fff; font-weight: bold; font-size: 12px; }
      .zoom range-bar { flex: 1; margin: 0 9px 0 8px; } .zoom b { margin: 0 12px 0 0; } .zoom i { font-style: normal; margin: 0 3px; }
      .mid { flex: 1; display: flex; min-height: 0; } injection-chart { flex: 1; margin-left: 2px; min-width: 0; }
      .mid scroll-track { width: 18px; margin: 3px 5px 0 4px; }
      .nav { display: flex; gap: 1px; height: 45px; margin: 6px 0 4px 2px; }
      .nav button { width: 24px; display: grid; place-items: center; }
      .tracks { flex: 1; display: grid; grid-template-rows: 1fr 1fr; } .tracks ~ button { margin-right: 1px; }
      .locks { display: grid; gap: 1px; margin-left: 2px; } .nav .locks button { width: 60px; display: flex; align-items: center; gap: 4px; padding-left: 3px; font-weight: bold; font-size: 12px; }
      .go { width: 190px; margin: -4px 0 0 4px; } .go div { margin: 0 0 0 6px; gap: 7px; padding-top: 4px; }
      .go tool-sep { background: none; margin: 0 -3px; }`;
  }
  html() {
    const nav = n => `<button class="raised" aria-label="${n}"><ui-icon name="${n}"></ui-icon></button>`;
    return `<div class="row zoom"><span>Zoom H: 16</span><range-bar value="100" label="Zoom H"></range-bar><b>256</b>
        <text-field w="34" h="20" bold value="256" label="larghezza"></text-field><i>x</i><text-field w="30" h="20" bold value="1" label="fattore"></text-field><spin-buttons h="10"></spin-buttons></div>
      <div class="mid"><injection-chart></injection-chart><scroll-track vertical></scroll-track></div>
      <div class="nav">${nav('first')}${nav('prev')}<div class="tracks"><scroll-track dark></scroll-track><scroll-track></scroll-track></div>
        ${nav('next')}${nav('last')}${nav('prevd')}${nav('nextd')}
        <div class="locks"><button class="raised"><ui-icon name="lock"></ui-icon>ORI</button><button class="raised"><ui-icon name="lock"></ui-icon>MOD</button></div>
        ${nav('arrows')}
        <group-box class="go" label="Vai a ..."><div class="row"><text-field w="65" h="20" bold value="1DC4B4" label="Vai a"></text-field><ui-icon name="arrowsl"></ui-icon><ui-icon name="arrowsr"></ui-icon><tool-sep></tool-sep><ui-icon name="ml"></ui-icon><ui-icon name="mr"></ui-icon></div></group-box>
      </div>`;
  }
}
customElements.define('work-area', WorkArea);

class SidePanel extends Part {
  css() {
    return `:host { display: flex; flex-direction: column; }
      .cur { height: 57px; margin-top: -1px; } .vis { height: 227px; } .memo { height: 84px; margin-top: auto; margin-bottom: 4px; }
      .cur .in { position: relative; margin: 0 0 0 3px; } .cur .max { gap: 10px; height: 20px; } .cur .max div { display: flex; }
      .key { position: absolute; right: 6px; top: -14px; width: 22px; height: 21px; display: grid; place-items: center; background: #eceae4; border: 1px solid; border-color: #606060 #fff #fff #606060; }
      .box { margin: 0 3px 0 4px; border: 1px solid; border-color: #fff #808080 #808080 #fff; }
      .box > div { padding: 4px 0 3px 4px; border-bottom: 1px solid #808080; box-shadow: 0 1px #fff; }
      .box > div:last-child { border: 0; box-shadow: none; }
      .box .two { display: flex; gap: 13px; height: 33px; align-items: center; padding-top: 7px; } .bits { display: grid; gap: 2px; }
      .split { display: flex; gap: 43px; }
      .box .al { font-weight: bold; font-size: 12px; justify-content: space-between; padding: 5px 6px 3px 4px; }
      .al div { display: flex; align-items: center; background: #fff; border: 1px solid; border-color: #808080 #fff #fff #808080; box-shadow: inset 1px 1px #404040; padding: 2px; }
      .al input { width: 20px; height: 17px; border: 0; padding-left: 3px; }
      .use { margin: 6px 0 0 8px; } .zv { margin: 6px 12px 0 5px; font-weight: bold; font-size: 12px; gap: 8px; white-space: nowrap; } .zv range-bar { width: 77px; }
      .pad { display: grid; grid-template-columns: repeat(5, 19px); gap: 4px; margin: 1px 18px 0 9px; padding: 4px; border: 1px solid; border-color: #808080 transparent transparent #808080; box-shadow: inset 1px 1px #fff; }
      .pad button { height: 18px; border: 0; font-weight: bold; font-size: 12px; color: #808080; text-shadow: 1px 1px #fff; } .pad .p { background: none; }`;
  }
  html() {
    return `<group-box class="cur" label="Cursore"><div class="in"><button class="key" aria-label="lock"><ui-icon name="lock"></ui-icon></button>
        <check-item>ORI &gt;&gt; MOD</check-item><div class="row max"><check-item on>Max var.</check-item><div><text-field w="34" h="20" bold value="15" label="Max var."></text-field><spin-buttons h="10"></spin-buttons></div></div></div></group-box>
      <group-box class="vis" label="Visualizzazione"><div class="box">
        <div class="two"><check-item type="radio" off>IEEE</check-item><check-item type="radio" off on>Motorola</check-item></div>
        <div class="bits"><div class="split"><check-item type="radio" off>8 bit</check-item><check-item off>+/-</check-item></div>
          <check-item type="radio" off on>16 bit</check-item><check-item type="radio" off>32 bit</check-item><check-item type="radio" off>Virgola mobile</check-item></div>
        <div class="row al"><label for="al">Allineamento:</label><div><input id="al" value="0"><spin-buttons h="8"></spin-buttons></div></div></div>
        <div class="use"><check-item on>Usa info driver</check-item><check-item on>Usa ultima mappa</check-item></div>
        <div class="row zv"><span>Zoom V:</span><range-bar value="0" label="Zoom V"></range-bar></div></group-box>
      <group-box class="memo" label="Memo indirizzi"><div class="pad">${[...Array(12).keys()].map(n => `<button class="dither">${n + 1}</button>`).join('')}<button class="p" aria-label="modifica"><ui-icon name="hand"></ui-icon></button></div></group-box>`;
  }
}
customElements.define('side-panel', SidePanel);

class StatusBar extends Part {
  css() {
    return `:host { display: flex; gap: 2px; height: 20px; border-bottom: 1px solid #fff; padding-bottom: 2px; }
      span { padding: 1px 2px; border: 1px solid; border-color: #808080 #fff #fff #808080; }
      span:nth-of-type(1) { width: 350px; } span:nth-of-type(2) { width: 218px; } span:nth-of-type(3) { width: 98px; } span:nth-of-type(4) { flex: 1; }`;
  }
  html() { return '<span></span><span></span><span></span><span>Checksum: 85</span>'; }
}
customElements.define('status-bar', StatusBar);

/* ---------- task bars ---------- */

class GuestTaskbar extends Part {
  css() {
    return `:host { display: flex; align-items: center; height: 42px; padding: 0 2px; box-shadow: inset 0 1px #fff; }
      .app { display: grid; place-items: center; width: 48px; height: 38px; border: 0; background: none; margin-right: 2px; }
      .app.raised { border: 1px solid; border-color: #fff #404040 #404040 #fff; background: #dcd8d2; }
      .app.on { background: #fff; border: 1px solid; border-color: #404040 #fff #fff #404040; }
      .start { display: flex; align-items: center; width: 52px; height: 38px; gap: 1px; font-weight: bold; font-size: 12px; margin-right: 9px; }
      .tray { display: flex; align-items: center; height: 38px; margin-left: auto; padding: 0 1px 0 0; gap: 8px; border: 1px solid; border-color: #808080 #fff #fff #808080; }
      .tray ui-icon:first-of-type { margin-right: -3px; }
      time { width: 66px; text-align: center; line-height: 16px; margin: 0 -4px 0 1px; }`;
  }
  html() {
    const app = (n, c = '') => `<button class="app ${c}" aria-label="${n}"><ui-icon name="${n}" size="32"></ui-icon></button>`;
    return `<button class="start raised"><ui-icon name="flag7"></ui-icon>Start</button>
      ${app('ie')}${app('folder')}${app('media')}${app('chrome', 'raised')}${app('etp')}${app('facebook')}${app('youtube')}${app('ecm', 'raised on')}
      <div class="tray">${['up2', 'flagx', 'plug', 'net', 'vol'].map(n => `<ui-icon name="${n}"></ui-icon>`).join('')}<time>17:51<br>07/11/2018</time><ui-icon name="desk"></ui-icon></div>`;
  }
}
customElements.define('guest-taskbar', GuestTaskbar);

class VmStatus extends Part {
  css() {
    return `:host { display: flex; justify-content: flex-end; align-items: center; gap: 3px; height: 21px; padding-right: 1px; background: #f0f0f0; font: 11px/16px "Open Sans", sans-serif; }`;
  }
  html() {
    return ['hdd', 'cd', 'audio', 'netw', 'usb', 'share', 'disp', 'rec', 'cpu', 'mouse', 'key'].map(n => `<ui-icon name="${n}"></ui-icon>`).join('') + '<span>Right Ctrl</span>';
  }
}
customElements.define('vm-status', VmStatus);

class HostTaskbar extends Part {
  css() {
    return `:host { display: flex; align-items: center; height: 40px; background: #14212a; color: #fff; font: 12px/18px "Open Sans", sans-serif; }
      button { display: grid; place-items: center; width: 49px; height: 40px; border: 0; background: none; }
      button.home { width: 48px; } button.run { border-bottom: 2px solid #fcd4a8; width: 40px; margin: 0 5px 0 4px; padding-top: 2px; }
      .search { display: flex; align-items: center; gap: 10px; width: 344px; height: 40px; padding: 0 12px 0 10px; background: #f2f2f2; border-top: 1px solid #c0c0c0; }
      .search input { flex: 1; min-width: 0; border: 0; outline: 0; background: none; font-size: 14px; color: #404040; } .search input::placeholder { color: #404040; opacity: 1; }
      .tray { display: flex; align-items: center; gap: 9px; margin-left: auto; } .tray ui-icon:first-child { margin-right: 10px; }
      time { width: 66px; text-align: center; margin: 0 4px 0 0; } .edge { width: 4px; height: 40px; border-left: 1px solid #606a70; margin-left: 12px; }`;
  }
  html() {
    const app = (n, s = 22, c = '') => `<button class="${c}" aria-label="${n}"><ui-icon name="${n}" size="${s}"></ui-icon></button>`;
    return `${app('win10', 16, 'home')}<label class="search"><ui-icon name="cortana" size="20"></ui-icon><input type="text" aria-label="ricerca" placeholder="Scrivi qui per eseguire la ricerca"><ui-icon name="mic" size="18"></ui-icon></label>
      ${app('task', 16)}${app('edge')}${app('explorer', 22, 'run')}${app('store')}${app('mail')}${app('chrome')}${app('skype')}${app('vbox', 24, 'run')}
      <div class="tray">${['people', 'up', 'battery', 'wifi', 'volw'].map(n => `<ui-icon name="${n}"></ui-icon>`).join('')}<span>ENG</span><time>17:51<br>07/11/2018</time><ui-icon name="action"></ui-icon><span class="edge"></span></div>`;
  }
}
customElements.define('host-taskbar', HostTaskbar);

class VmDesktop extends Part {
  css() {
    return `:host { display: flex; flex-direction: column; height: 100vh; min-height: 860px; }
      main { flex: 1; display: flex; min-height: 0; padding-right: 2px; } work-area { flex: 1; } side-panel { width: 151px; }`;
  }
  html() {
    return `<vm-header></vm-header><ecm-header></ecm-header><tool-panel></tool-panel><data-panel></data-panel>
      <main><work-area></work-area><side-panel></side-panel></main>
      <status-bar></status-bar><guest-taskbar></guest-taskbar><vm-status></vm-status><host-taskbar></host-taskbar>`;
  }
}
customElements.define('vm-desktop', VmDesktop);

// measured on connect, so it is defined once everything around it has its size
customElements.define('injection-chart', InjectionChart);
</script>
</body>
</html>
